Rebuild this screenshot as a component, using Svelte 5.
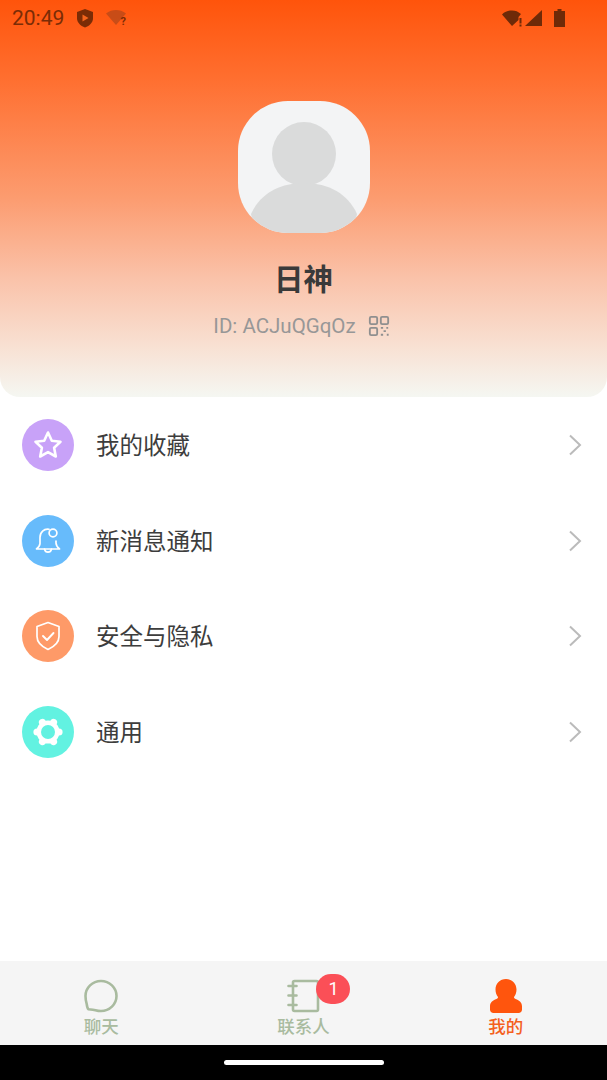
<script>
  const menu = [
    { label: '我的收藏', color: '#c8a2f8', icon: 'star' },
    { label: '新消息通知', color: '#67bbfb', icon: 'bell' },
    { label: '安全与隐私', color: '#fe9a68', icon: 'shield' },
    { label: '通用', color: '#62f2e1', icon: 'gear' }
  ];

  const bumps = [0, 60, 120, 180, 240, 300];
</script>

<div class="page">
  <header class="profile">
    <div class="status">
      <div class="status-left">
        <span class="time">20:49</span>
        <svg width="18" height="20" viewBox="0 0 18 20">
          <path d="M9 1l8 3v6c0 4.500-3.300 7.800-8 9.500C4.300 17.800 1 14.500 1 10V4z" fill="#7a2c06" />
          <path d="M6.500 6.500l6 3.500-6 3.500z" fill="#f3641c" />
        </svg>
        <svg class="wifi-off" width="24" height="20" viewBox="0 0 24 20">
          <path d="M0 5.500C3 3 6.500 2 10 2s7 1 10 3.500L10 17z" fill="#b5481a" opacity="0.75" />
          <text x="14.500" y="17" class="q">?</text>
        </svg>
      </div>
      <div class="status-right">
        <svg width="24" height="20" viewBox="0 0 24 20">
          <path d="M1 6.500C4 3.500 7.500 2.500 11 2.500s6 1 9 3.500l-2.500 3v3L11 18z" fill="#6e2a08" />
          <rect x="18.500" y="10" width="2" height="5.500" fill="#6e2a08" />
          <rect x="18.500" y="16.500" width="2" height="2" fill="#6e2a08" />
        </svg>
        <svg class="signal" width="20" height="20" viewBox="0 0 20 20"><path d="M1 18L18 2v16z" fill="#6e2a08" /></svg>
        <svg class="battery" width="14" height="20" viewBox="0 0 14 20">
          <path d="M4.500 1h4v2h3.500v16H1v-16h3.500z" fill="#6e2a08" />
        </svg>
      </div>
    </div>

    <div class="avatar">
      <svg width="132" height="132" viewBox="0 0 132 132">
        <circle cx="66" cy="53" r="32" fill="#dadbdb" />
        <path d="M13 113c9-20 28-31 53-31s44 11 53 31l-4 19H17z" fill="#dadbdb" />
      </svg>
    </div>
    <div class="name">日神</div>
    <div class="id-row">
      <span>ID: ACJuQGqOz</span>
      <svg width="22" height="22" viewBox="0 0 24 24" fill="none" stroke="#8f8f8f" stroke-width="2">
        <rect x="2" y="2" width="8" height="8" rx="1.500" />
        <rect x="14" y="2" width="8" height="8" rx="1.500" />
        <rect x="2" y="14" width="8" height="8" rx="1.500" />
        <path d="M14 14h2.500M20 14h2M17 17.500h2.500M14 21.500h2.500M20.500 21.500h2" />
      </svg>
    </div>
  </header>

  <main class="menu">
    {#each menu as item}
      <div class="row">
        <span class="badge" style="background:{item.color}">
          <svg width="32" height="32" viewBox="0 0 32 32" fill="none" stroke="#fff" stroke-width="2" stroke-linejoin="round" stroke-linecap="round">
            {#if item.icon === 'star'}
              <path stroke-width="2.600" d="M16 3.500l3.800 8.200 8.700 1-6.400 6 1.700 8.800-7.800-4.400-7.800 4.400 1.700-8.800-6.400-6 8.700-1z" />
            {:else if item.icon === 'bell'}
              <path stroke-width="1.700" d="M17 4.300C12 3.500 8 7 8 12.500v6c0 2-1.300 3.500-3.500 5.500h23c-2-1.800-3.500-3.500-3.500-6v-2" />
              <circle stroke-width="1.700" cx="21" cy="8" r="3.900" />
              <path stroke-width="1.700" d="M12.500 24c.5 2.200 1.800 3.200 3.500 3.200s3-1 3.500-3.200" />
            {:else if item.icon === 'shield'}
              <path stroke-width="1.700" d="M16 2.500l11 4v10c0 6-4.500 10-11 13-6.500-3-11-7-11-13v-10z" />
              <path stroke-width="1.900" d="M11 16l4 4 6.500-7" />
            {:else}
              <g fill="#fff" stroke="none">
                <circle cx="16" cy="16" r="11.500" />
                {#each bumps as angle}
                  <circle cx="16" cy="16" r="3.600" transform="rotate({angle} 16 16) translate(11 0)" />
                {/each}
              </g>
              <circle cx="16" cy="16" r="7" fill={item.color} stroke="none" />
            {/if}
          </svg>
        </span>
        <span class="label">{item.label}</span>
        <svg class="chevron" width="14" height="24" viewBox="0 0 14 24" fill="none" stroke="#bbbbbb" stroke-width="2">
          <path d="M2 2.500l10 9.500-10 9.500" />
        </svg>
      </div>
    {/each}
  </main>

  <nav class="tabs">
    <div class="tab">
      <svg width="36" height="34" viewBox="0 0 36 34" fill="none" stroke="#a9bb9f" stroke-width="2.600">
        <path d="M18 2C9.500 2 2.500 8.800 2.500 17c0 3 .4 5.500 1.200 8 .3 2.500.6 4.200 1.800 5.200 2.500.2 5 .4 7 1 1.700.5 3.500.8 5.500.8 8.500 0 15.500-6.800 15.500-15S26.500 2 18 2z" />
      </svg>
      <span>聊天</span>
    </div>
    <div class="tab">
      <div class="book">
        <svg width="36" height="34" viewBox="0 0 36 34" fill="none" stroke="#a9bb9f" stroke-width="2.600" stroke-linecap="round" stroke-linejoin="round">
          <path d="M8 3.500C8 2.500 8.500 2 9.500 2h22c1 0 1.500.5 1.500 1.500v27c0 1-.5 1.500-1.500 1.500h-22c-1 0-1.500-.5-1.500-1.500z" />
          <path d="M3.500 7h8M3.500 16.500h8M3.500 26h8" />
        </svg>
        <b class="count">1</b>
      </div>
      <span>联系人</span>
    </div>
    <div class="tab active">
      <svg width="36" height="34" viewBox="0 0 36 34">
        <path d="M18 0c6 0 10.500 4.500 10.500 10.500 0 3-1 5.500-2.500 7.500 0 1 .5 1.500 1.500 2 4 1.500 6.500 3.500 6.500 7.500v3c0 2-1.500 3.500-3.500 3.500H5.500C3.500 34 2 32.500 2 30.500v-3c0-4 2.500-6 6.500-7.500 1-.5 1.500-1 1.500-2-1.500-2-2.500-4.500-2.500-7.500C7.500 4.500 12 0 18 0z" fill="#ff550d" />
      </svg>
      <span>我的</span>
    </div>
  </nav>

  <div class="system-bar"><i></i></div>
</div>

<style>
  :global(body) {
    margin: 0;
    background: #fff;
  }

  .page {
    width: 607px;
    height: 1080px;
    display: flex;
    flex-direction: column;
    overflow: hidden;
    font-family: "Noto Sans CJK SC", "Noto Sans", sans-serif;
  }

  .profile {
    height: 397px;
    box-sizing: border-box;
    display: flex;
    flex-direction: column;
    align-items: center;
    border-radius: 0 0 20px 20px;
    background: linear-gradient(180deg, #ff540b 0%, #ff6f30 20%, #fc9c70 50%, #fac2a9 70%, #f8e0d2 87%, #f5f7f2 100%);
  }

  .status {
    width: 100%;
    height: 36px;
    box-sizing: border-box;
    padding: 0 40px 0 12px;
    display: flex;
    justify-content: space-between;
    align-items: center;
    color: #7a2c06;
  }

  .status-left,
  .status-right {
    display: flex;
    align-items: center;
  }

  .status-left { gap: 12px; }

  .signal { margin-left: -1px; }
  .battery { margin-left: 9px; }

  .time {
    font: 21px Roboto, sans-serif;
  }

  .q {
    font: bold 11px Roboto, sans-serif;
    fill: #7a2c06;
  }

  .avatar {
    width: 132px;
    height: 132px;
    margin-top: 65px;
    border-radius: 50px;
    overflow: hidden;
    background: #f3f4f5;
  }

  .avatar svg {
    display: block;
  }

  .name {
    margin-top: 22px;
    font-size: 29.500px;
    line-height: 44px;
    font-weight: 700;
    color: #3a3a3a;
  }

  .id-row {
    margin-top: 15px;
    padding-right: 4px;
    display: flex;
    align-items: center;
    gap: 12px;
    font: 20.500px/24px Roboto, sans-serif;
    color: #979797;
  }

  .menu {
    flex: 1;
    background: #fff;
  }

  .row {
    height: 95.700px;
    display: flex;
    align-items: center;
    padding: 0 25px 0 22px;
  }

  .badge {
    width: 52px;
    height: 52px;
    border-radius: 50%;
    display: flex;
    align-items: center;
    justify-content: center;
    flex: none;
  }

  .label {
    flex: 1;
    margin: 0 0 2px 22px;
    font-size: 23.500px;
    color: #3d3d3d;
  }

  .tabs {
    height: 84px;
    flex: none;
    display: grid;
    grid-template-columns: repeat(3, 1fr);
    background: #f5f5f5;
  }

  .tab {
    display: flex;
    flex-direction: column;
    align-items: center;
    padding-top: 18px;
    font-size: 17.500px;
    line-height: 20px;
    font-weight: 500;
    color: #a9bb9f;
  }

  .tab svg {
    display: block;
  }

  .tab span {
    margin-top: 3px;
  }

  .tab.active {
    color: #f4601d;
  }

  .book {
    position: relative;
  }

  .count {
    position: absolute;
    left: 31px;
    top: -5px;
    width: 34px;
    height: 30px;
    border-radius: 15px;
    background: #fb4f57;
    color: #fff;
    font: 18px/30px Roboto, sans-serif;
    text-align: center;
  }

  .system-bar {
    height: 35px;
    flex: none;
    background: #000;
    display: flex;
    align-items: center;
    justify-content: center;
  }

  .system-bar i {
    width: 160px;
    height: 5px;
    border-radius: 3px;
    background: #fff;
  }
</style>
